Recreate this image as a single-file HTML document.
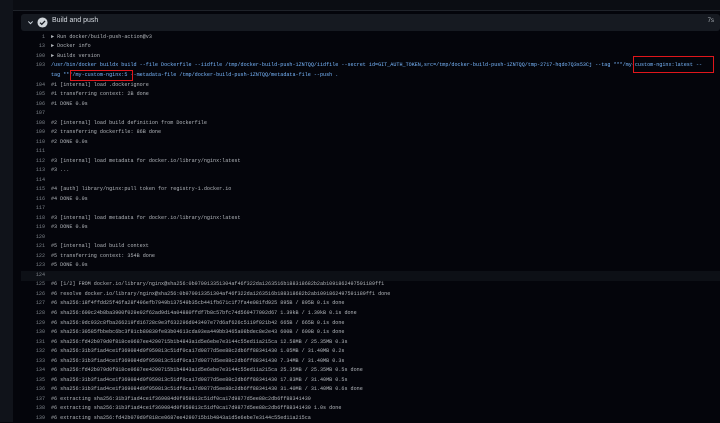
<!DOCTYPE html>
<html><head><style>
html,body{margin:0;padding:0;width:720px;height:422px;overflow:hidden;background:#04050b}
#left{position:absolute;left:0;top:0;width:13px;height:422px;background:#10131a}
#topline{position:absolute;left:13px;top:0;width:707px;height:10px;background:#0b0d13;border-bottom:1px solid #1f232a}
#hdr{position:absolute;left:21px;top:14px;width:699px;height:17px;background:#161a21;border-radius:3px}
#hdr .t{position:absolute;left:31px;top:3px;font:7px "Liberation Sans",sans-serif;color:#d6dbe1}
#hdr .s{position:absolute;right:6px;top:4px;font:6px "Liberation Sans",sans-serif;color:#b0b6bd}
.l{position:absolute;left:21px;height:9.5px;width:699px;font:5.1px/9.5px "Liberation Mono",monospace;color:#b3b7bc;white-space:pre}
.l .n{position:absolute;left:0;width:24px;text-align:right;color:#7d838a}
.l .c{position:absolute;left:30px}
.b{color:#79b8ff}
.box{position:absolute;border:1.5px solid #e0161b}
</style></head><body>
<div id="left"></div><div id="topline"></div>
<div id="hdr">
<svg style="position:absolute;left:6px;top:5px" width="7" height="7" viewBox="0 0 8 8"><path d="M1.5 2.8 L4 5.3 L6.5 2.8" stroke="#c9d1d9" stroke-width="1.1" fill="none"/></svg>
<svg style="position:absolute;left:16px;top:3px" width="11" height="11" viewBox="0 0 12 12"><circle cx="6" cy="6" r="5.5" fill="#d0d5da"/><path d="M3.3 6.2 L5.2 8 L8.8 4.3" stroke="#161a21" stroke-width="1.4" fill="none"/></svg>
<span class="t">Build and push</span><span class="s">7s</span></div>
<div style="position:absolute;left:21px;top:271px;width:699px;height:10px;background:#0d1016"></div>
<div id="lines"></div>
<div class="box" style="left:633px;top:56px;width:79px;height:15px"></div>
<div class="box" style="left:70px;top:70px;width:61px;height:9px"></div>
<script>
const L=[
["1","► Run docker/build-push-action@v3"],
["13","► Docker info"],
["100","► Buildx version"],
["103","<span class=b>/usr/bin/docker buildx build --file Dockerfile --iidfile /tmp/docker-build-push-1ZNTQQ/iidfile --secret id=GIT_AUTH_TOKEN,src=/tmp/docker-build-push-1ZNTQQ/tmp-2717-hqdo7Q3s53Cj --tag ***/my-custom-nginx:latest --</span>"],
["","<span class=b>tag ***/my-custom-nginx:5 --metadata-file /tmp/docker-build-push-1ZNTQQ/metadata-file --push .</span>"],
["104","#1 [internal] load .dockerignore"],
["105","#1 transferring context: 2B done"],
["106","#1 DONE 0.0s"],["107",""],
["108","#2 [internal] load build definition from Dockerfile"],
["109","#2 transferring dockerfile: 86B done"],
["110","#2 DONE 0.0s"],["111",""],
["112","#3 [internal] load metadata for docker.io/library/nginx:latest"],
["113","#3 ..."],["114",""],
["115","#4 [auth] library/nginx:pull token for registry-1.docker.io"],
["116","#4 DONE 0.0s"],["117",""],
["118","#3 [internal] load metadata for docker.io/library/nginx:latest"],
["119","#3 DONE 0.9s"],["120",""],
["121","#5 [internal] load build context"],
["122","#5 transferring context: 354B done"],
["123","#5 DONE 0.0s"],["124",""],
["125","#6 [1/2] FROM docker.io/library/nginx@sha256:0b970013351304af46f322da1263516b188318682b2ab1091862497591189ff1"],
["126","#6 resolve docker.io/library/nginx@sha256:0b970013351304af46f322da1263516b188318682b2ab1091862497591189ff1 done"],
["127","#6 sha256:18f4ffdd25f46fa28f496efb7949b137549b35cb441fb671c1f7fa4e081fd925 895B / 895B 0.1s done"],
["128","#6 sha256:600c24b8ba3900f029e02f62ad9d14a04880ffdf7b8c57bfc74d569477002d67 1.39kB / 1.39kB 0.1s done"],
["129","#6 sha256:9dc932c8fba266219fd16728c9e3f632296d043407e77d6af626c5119f021b42 665B / 665B 0.1s done"],
["130","#6 sha256:30585fbbebc6bc3f81cb80830fe83b04613cda93ea449bb3465a08bdec8e2e43 600B / 600B 0.1s done"],
["131","#6 sha256:fd42b079d0f818ce0687ee4290715b1b4843a1d5e6ebe7e3144c55ed11a215ca 12.58MB / 25.35MB 0.3s"],
["132","#6 sha256:31b3f1ad4ce1f369084d0f959813c51df0ca17d9877d5ee88c2db6ff88341430 1.05MB / 31.40MB 0.2s"],
["133","#6 sha256:31b3f1ad4ce1f369084d0f959813c51df0ca17d9877d5ee88c2db6ff88341430 7.34MB / 31.40MB 0.3s"],
["134","#6 sha256:fd42b079d0f818ce0687ee4290715b1b4843a1d5e6ebe7e3144c55ed11a215ca 25.35MB / 25.35MB 0.5s done"],
["135","#6 sha256:31b3f1ad4ce1f369084d0f959813c51df0ca17d9877d5ee88c2db6ff88341430 17.83MB / 31.40MB 0.5s"],
["136","#6 sha256:31b3f1ad4ce1f369084d0f959813c51df0ca17d9877d5ee88c2db6ff88341430 31.40MB / 31.40MB 0.6s done"],
["137","#6 extracting sha256:31b3f1ad4ce1f369084d0f959813c51df0ca17d9877d5ee88c2db6ff88341430"],
["138","#6 extracting sha256:31b3f1ad4ce1f369084d0f959813c51df0ca17d9877d5ee88c2db6ff88341430 1.0s done"],
["139","#6 extracting sha256:fd42b079d0f818ce0687ee4290715b1b4843a1d5e6ebe7e3144c55ed11a215ca"]];
let h="";L.forEach((r,i)=>{let y=i<5?32.5+i*9.6:80.5+(i-5)*9.52;h+=`<div class="l" style="top:${y}px"><span class="n">${r[0]}</span><span class="c">${r[1]}</span></div>`});
document.getElementById("lines").innerHTML=h;
</script>
</body></html>
